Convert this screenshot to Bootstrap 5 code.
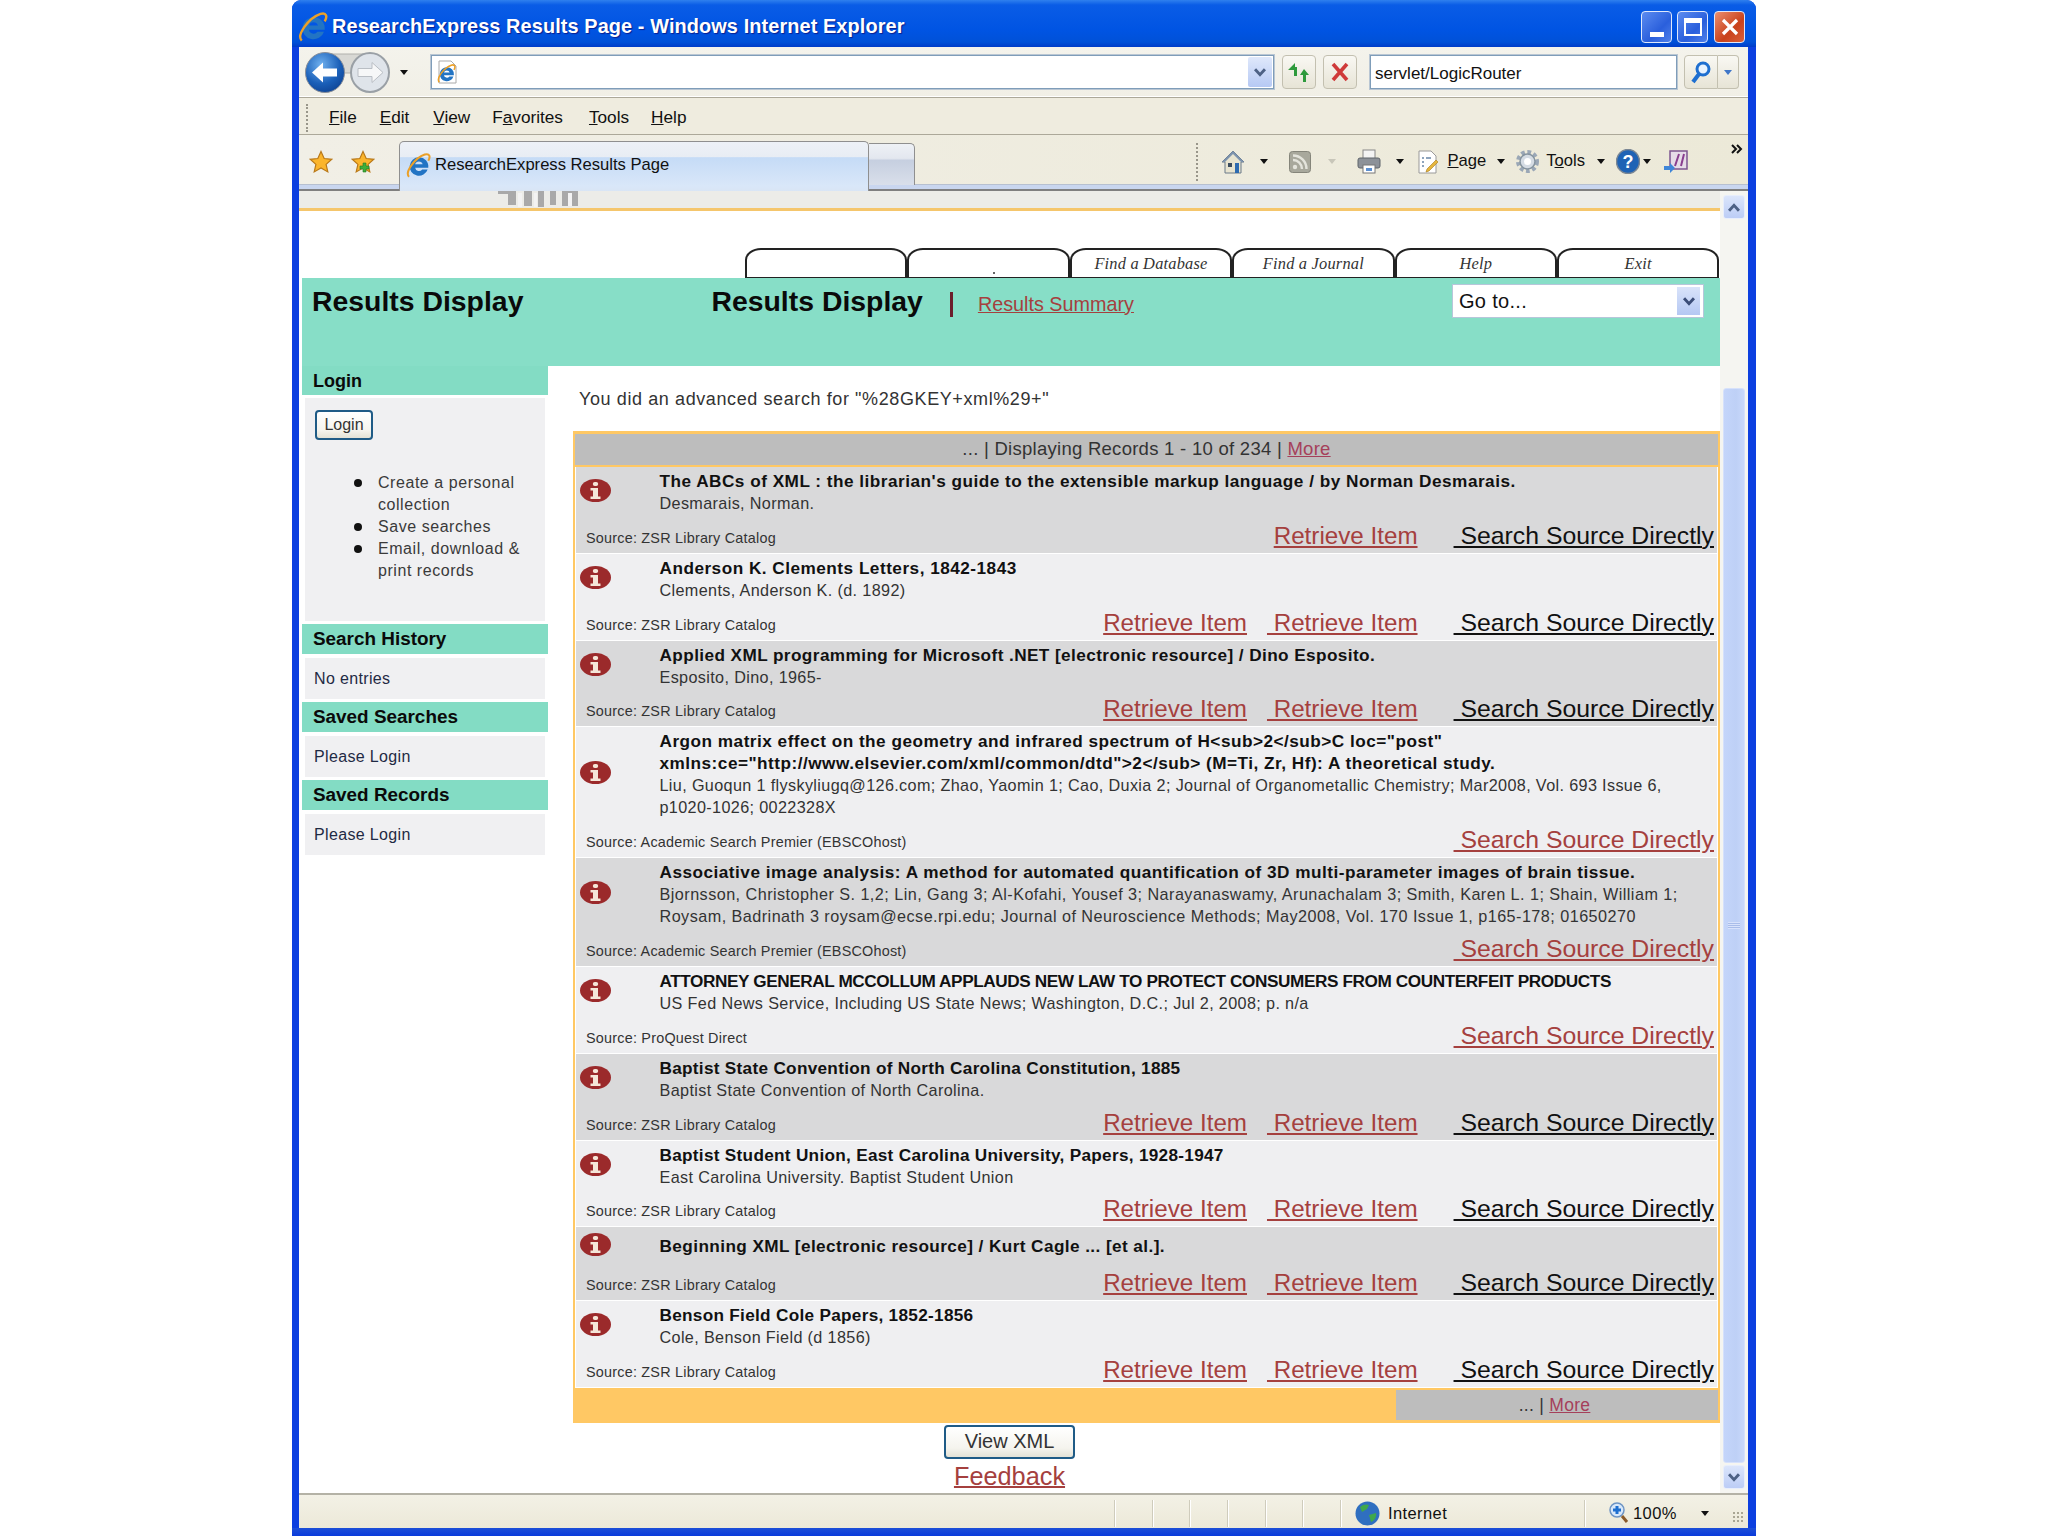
<!DOCTYPE html>
<html lang="en"><head><meta charset="utf-8"><title>ResearchExpress Results Page</title>
<link href="https://cdn.jsdelivr.net/npm/bootstrap@5.3.0/dist/css/bootstrap.min.css" rel="stylesheet">
<style>
html,body{margin:0;background:#fff;overflow:hidden}
body{font-family:"Liberation Sans",Arial,sans-serif;color:#222}
.xp-win{width:1464px;height:1536px;background:#0c3fe0;border-radius:9px 9px 0 0;overflow:hidden}
.xp-title{height:47px;background:linear-gradient(#2f80ee 0,#0a5ce6 5px,#0054e3 30px,#0051d8 42px,#003cc8 47px);padding:6px 11px 0 6px}
.xp-title-text{color:#fff;font-weight:700;font-size:19.9px;letter-spacing:.1px;text-shadow:1px 1px 1px #0a1f8f;margin-left:4px;white-space:nowrap}
.xp-cap{width:31px;height:32px;border:1px solid #dfe8fb;border-radius:4px;background:linear-gradient(135deg,#5c8cf0,#2a5fdc 60%,#4f80ea);margin-left:5px}
.xp-cap.cap-close{background:linear-gradient(135deg,#eb8f6e,#c9421c 60%,#d9603a);margin-left:6px}
.xp-body{margin:0 8px 0 7px}
.addr-row{height:51px;background:linear-gradient(#f4f3ec,#f1efe6);border-bottom:1px solid #aca899;box-shadow:inset 0 -1px 0 #fff}
.nav-pair{width:85px;height:41px;margin-left:6px;flex:none}
.drop-tri{width:0;height:0;border-left:4px solid transparent;border-right:4px solid transparent;border-top:5px solid #111;flex:none}
.tri-main{margin-left:10px}
.addr-box{height:34px;border:1px solid #7f9db9;outline:1px solid #b9c6d3;background:#fff;flex:none}
.addr-main{width:843px;margin-left:23px;padding:0 0 0 4px}
.addr-search{width:307px;margin-left:13px;font-size:17px;padding-left:4px;color:#111;line-height:36px}
.addr-drop{width:24px;height:30px;margin:1px;background:linear-gradient(#dfe8fb,#b6c9f4);border-radius:2px;color:#4d6185}
.tool-btn{height:34px;border:1px solid #c3c0b0;border-radius:4px;background:linear-gradient(#f9f8f3,#e7e4d6)}
.btn-go{width:34px;margin-left:8px}.btn-stop{width:34px;margin-left:7px}
.btn-find{width:34px;margin-left:7px;border-radius:4px 0 0 4px}.btn-find-arrow{width:21px;border-left:0;border-radius:0 4px 4px 0}
.menu-row{height:37px;background:#efecdf;border-bottom:1px solid #aca899;font-size:17.2px;color:#111;padding:3px 0 0 7px}
.menu-row span.mi{white-space:nowrap}
.grip{width:2px;height:28px;border-left:2px dotted #99968a}
.mi-file{margin-left:21px}.mi-edit{margin-left:23px}.mi-view{margin-left:24px}.mi-fav{margin-left:22px}.mi-tools{margin-left:26px}.mi-help{margin-left:22px}
.tab-row{height:56px;background:linear-gradient(90deg,#f1efe6,#ece9d8);box-shadow:inset 0 -6px 0 #c9d6ef,inset 0 -7px 0 #b7c0d0;position:relative;padding-left:10px;font-size:16.6px;color:#111}
.tab-row::after{content:"";position:absolute;left:0;right:0;bottom:0;height:2px;background:#7f7f7f}
.star-a{margin-bottom:3px}.star-b{margin:0 0 3px 18px}
.ie-tab{width:470px;height:50px;margin-left:24px;border:1px solid #8f8f8f;border-bottom:0;border-radius:5px 5px 0 0;background:linear-gradient(#edf1f7 0,#e8edf4 30%,#c5dbf6 32%,#d9e7f9 90%,#d9e5f5);z-index:1;padding:0 0 2px 6px;align-self:flex-end}
.new-tab{width:46px;height:42px;border:1px solid #8f8f8f;border-left:0;border-bottom:0;border-radius:0 5px 0 0;background:linear-gradient(#eef1f6,#e3e7ef 35%,#c6cfe0 40%,#d9dfea);align-self:flex-end;margin-bottom:6px}
.tb-divider{height:38px;border-left:2px dotted #99968a;margin-left:auto;margin-bottom:3px}
.tb-group{margin:0 5px 3px 0}
.ti{flex:none;display:block}
.view{height:1302px;background:#fff}
.pg{flex:1 1 auto;min-width:0;padding-left:3px;background:#fff;overflow:hidden}
.strip{height:17px;background:#ecece8;padding-left:197px;margin-left:-3px}
.orange-line{height:3px;background:#f5c66c;margin-left:-3px}
.tabs-gap{height:37px}
.tabs-line{padding-left:443px}
.rtab{width:162.4px;height:30px;border:2px solid #222;border-bottom:1px solid #222;border-radius:16px 16px 0 0/12px 12px 0 0;background:#fff;font-family:"Liberation Serif",serif;font-style:italic;font-size:16.4px;color:#333;text-align:center;line-height:27px;letter-spacing:.2px}
.band{height:88px;background:#87dec7;padding:0 16px 0 10px;position:relative}
.band-h{font-size:28.4px;font-weight:700;color:#0a0a0a;line-height:46px;white-space:nowrap}
.band-h.h-two{margin-left:188px}
.band-sep{width:3px;height:25px;background:#6b1f2c;margin:14px 0 0 27px}
.band-link{font-size:19.8px;margin:14px 0 0 25px;color:#a5403e;line-height:24px;white-space:nowrap}
.goto{width:252px;height:34px;margin:6px 0 0 auto;background:#fff;border:1px solid #b7c6da;font-size:20px;line-height:32px;padding-left:6px;color:#111;letter-spacing:.3px}
.goto-btn{width:23px;height:28px;margin:2px 3px 0 0;background:linear-gradient(#d9e3fa,#b5c8f3);color:#3b4d78}
.side{width:246px;flex:none}
.side-h{background:#83dcc4;height:30px;padding-left:11px;font-weight:700;font-size:18.9px;line-height:30px;color:#0a0a0a;white-space:nowrap}
.side-h.h-login{height:29px;line-height:31px;font-size:18px}
.side-p{background:#f0f0f2;margin:4px 3px 3px;font-size:16px;padding-left:9px;color:#1f2a44;letter-spacing:.35px}
.side-p.p-mini{height:41px;line-height:41px}
.side-p.p-login{height:223px;margin-top:3px;padding:12px 0 0 10px}
.xp-btn{display:inline-block;background:linear-gradient(#fff,#f5f4ee 70%,#e4e2d6);border:2px solid #1f5b86;border-radius:4px;color:#333;line-height:1}
.btn-login{width:58px;height:30px;font-size:16px;line-height:26px;text-align:center;letter-spacing:0}
.side-list{margin:32px 0 0;padding:0 0 0 63px;color:#3a3a3a;line-height:22px;font-size:16px;list-style:none;letter-spacing:.55px}
.side-list li::before{content:"";display:inline-block;width:8px;height:8px;border-radius:50%;background:#111;margin:0 16px 1px -24px;vertical-align:middle}
.main-col{flex:1 1 auto;min-width:0;padding-left:25px}
.search-line{font-size:18px;color:#333;height:65px;line-height:66px;padding-left:6px;letter-spacing:.6px;white-space:nowrap}
.res-box{background:#fff;border:2px solid #ffc864;border-top-width:3px;border-bottom:0;width:1147px}
.res-head{background:#bdbdbd;border-bottom:2px solid #ffc864;height:33px;font-size:18.5px;color:#333;line-height:30px;box-sizing:border-box;letter-spacing:.27px}
.res-head a,.res-more a{color:#a5405a}
.rec{border-bottom:1px solid #fff;margin:0 1px}
.rec-a{background:#d9d9da}.rec-b{background:#efeff1}
.rec-top{padding:3px 0;min-height:37px}
.info-ic{width:31px;height:23px;flex:none;margin:0 48.5px 3px 4px}
.rec-txt{font-size:16.2px;line-height:22px;color:#333;letter-spacing:.36px;white-space:nowrap}
.rec-txt b{color:#111;font-size:17.2px;letter-spacing:.49px}
.rec-txt b.t-caps{letter-spacing:-.41px}
.rec-txt b.t-near{letter-spacing:.29px}
.rec-txt b.t-mid{letter-spacing:.41px}
.rec-txt .a-wide{letter-spacing:.46px}
.rec-foot{height:35.8px;padding:0 3px 0 10px;white-space:nowrap}
.rec-src{font-size:14.4px;color:#333;line-height:20px;margin-bottom:5px;letter-spacing:.22px}
.rlink{font-size:24.2px;line-height:28px;margin-bottom:3px;color:#a5403e;text-decoration:underline;text-decoration-thickness:2px;text-underline-offset:2px}
.rlink.l-a{margin-right:20px}.rlink.l-b{margin-right:36px}
.rlink.l-s{font-size:24.8px}
.rlink.l-dark{color:#111}
.res-foot{height:35px;background:#ffc864;margin:0 -2px;padding:2px 2px 3px 0}
.res-more{width:322px;margin-left:auto;background:#bdbdbd;font-size:17.5px;color:#333;letter-spacing:.3px;line-height:30px;padding-right:5px}
.pg-foot{padding:2px 3px 0 0}
.btn-xml{width:131px;height:34px;font-size:20px;line-height:29px;color:#333}
.fb-link{display:block;font-size:25.3px;line-height:33px;color:#a5403e;margin-top:1px;text-decoration-thickness:2px}
.sbar{width:28px;flex:none;background:#f5f5f1;padding:4px 3px}
.sb-btn{height:24px;background:linear-gradient(#dbe5fb,#bccdf6);border:1px solid #e8eefc;border-radius:3px;color:#4d6185}
.sb-gap{height:169px}
.sb-thumb{height:1075px;background:linear-gradient(90deg,#c4d5fa,#bed0f6 60%,#c8d8fa);border:1px solid #d6e1fb;border-radius:3px;margin-bottom:2px}
.grip-lines{width:12px;height:7px;background:repeating-linear-gradient(#d8e2fb 0 1px,#a9bdea 1px 2px)}
.status{height:35px;background:linear-gradient(#f3f1e6,#ece9d8);border-top:2px solid #b4b2a6;font-size:16.5px;color:#111;padding-top:3px}
.st-cell{height:27px;border-left:1px solid #fff;box-shadow:-1px 0 0 #cfccbc}
.st-left{width:816px}.st-c1{width:38px}.st-c2{width:37px}.st-c3{width:38px}.st-c4{width:38px}.st-c5{width:37px}.st-c6{width:38px}
.st-zone{width:244px;padding-left:13px;letter-spacing:.4px}
.st-zoom{flex:1 1 auto;padding-left:23px;letter-spacing:.4px}
.st-grip{width:12px;height:12px;margin:8px 4px 0 auto;background:radial-gradient(circle,#a9a693 1px,transparent 1.5px) 0 0/4px 4px}
.bottom-edge{height:8px;background:linear-gradient(#1d4fd6,#0a3bdc)}
.res-dot{display:block;width:2px;height:2px;background:#666;margin:22px 0 0 84px}
.m-home{margin-left:23px}.m-a1{margin-left:15px}.m-rss{margin-left:21px}.m-a2{margin-left:17px}.m-print{margin-left:21px}.m-a3{margin-left:15px}.m-pg{margin-left:13px}.m-pgt{margin-left:8px}.m-a4{margin-left:11px}.m-gear{margin-left:10px}.m-tools{margin-left:6px}.m-a5{margin-left:12px}.m-help{margin-left:11px}.m-a6{margin-left:3px}.m-res{margin-left:12px}
.m-more{margin:-26px 0 0 42px}
.tri-gray{border-top-color:#c8c6b9}.tri-blue{border-top-color:#3f76c8}.tri-zoom{margin-left:24px}
</style></head><body>
<svg width="0" height="0" class="d-block position-absolute" aria-hidden="true"><defs>
<symbol id="ielogo" viewBox="0 0 32 32"><path d="M16.500 5.500a11.800 11.800 0 1 0 11.200 15.500h-7a5 5 0 0 1-9-2.200H28.500a11.800 11.800 0 0 0-12-13.300zM11.700 14.500a5 5 0 0 1 9.600 0z" fill="#2274c4"/><path d="M4 30.500C-2 25 11 6.500 24 2c6.500-2 7.500 3 4.500 8" fill="none" stroke="#eba028" stroke-width="2.600"/></symbol>
<symbol id="i-info" viewBox="0 0 31 23" preserveAspectRatio="none"><ellipse cx="15.500" cy="11.500" rx="15.500" ry="11.500" fill="#9b2a2b"/><rect x="12.800" y="3" width="5.400" height="4" rx="2" fill="#f5e6d8"/><path d="M10.500 9h7.500v8.500h2.500v2.500h-10v-2.500h2.500v-6h-2.500z" fill="#f5e6d8"/></symbol>
<symbol id="i-chev" viewBox="0 0 12 10"><path d="M1.500 2 6 7l4.500-5" fill="none" stroke="currentColor" stroke-width="2.600"/></symbol>
<symbol id="i-chevu" viewBox="0 0 12 10"><path d="M1.500 8 6 3l4.500 5" fill="none" stroke="currentColor" stroke-width="2.600"/></symbol>
<symbol id="i-star" viewBox="0 0 24 24"><path d="M12 1.500l3.200 7 7.600.8-5.700 5.100 1.700 7.500L12 18l-6.800 3.900 1.700-7.500L1.200 9.300l7.600-.8z" fill="#fbb52c" stroke="#b9791a" stroke-width="1.200"/></symbol>
</defs></svg>
<div class="xp-win mx-auto d-flex flex-column">
  <div class="xp-title d-flex align-items-center">
    <svg class="ti" width="30" height="30"><use href="#ielogo"/></svg>
    <span class="xp-title-text">ResearchExpress Results Page - Windows Internet Explorer</span>
    <span class="xp-cap ms-auto d-flex align-items-end justify-content-center pb-1"><svg class="ti" width="14" height="6"><rect width="14" height="5" fill="#fff"/></svg></span>
    <span class="xp-cap d-flex align-items-center justify-content-center"><svg class="ti" width="18" height="18"><rect x="1" y="1" width="16" height="16" fill="none" stroke="#fff" stroke-width="2"/><rect x="1" y="1" width="16" height="4" fill="#fff"/></svg></span>
    <span class="xp-cap cap-close d-flex align-items-center justify-content-center"><svg class="ti" width="20" height="20"><path d="M3 3l14 14M17 3L3 17" stroke="#fff" stroke-width="3.200"/></svg></span>
  </div>
  <div class="xp-body d-flex flex-column flex-grow-1">
    <div class="addr-row d-flex align-items-center">
      <svg class="ti nav-pair" viewBox="0 0 85 41"><defs><radialGradient id="gb" cx=".4" cy=".3" r=".8"><stop offset="0" stop-color="#6fb0ee"/><stop offset=".6" stop-color="#1a5fb8"/><stop offset="1" stop-color="#0c3f8e"/></radialGradient></defs><path d="M20 2h45c12 0 19 8 19 19H1C1 10 8 2 20 2z" fill="#d8d8d4" stroke="#b0b0ac"/><ellipse cx="20" cy="20.500" rx="19.500" ry="20" fill="url(#gb)" stroke="#8a8f98"/><path d="M7 20.500l11-10v6h14v8H18v6z" fill="#fff"/><ellipse cx="65" cy="20.500" rx="19" ry="19.500" fill="#dfe4ea" stroke="#9aa0a6" stroke-width="2"/><path d="M78 20.500l-11-10v6H53v8h14v6z" fill="#f6f7f8" stroke="#b9bec4"/></svg>
      <span class="drop-tri tri-main"></span>
      <div class="addr-box addr-main d-flex align-items-center justify-content-between">
        <svg class="ti" width="23" height="24" viewBox="0 0 23 24"><path d="M3 1h12l5 5v17H3z" fill="#fff" stroke="#aaa"/><use href="#ielogo" x="1" y="4" width="19" height="19"/></svg>
        <span class="addr-drop d-flex align-items-center justify-content-center"><svg class="ti" width="14" height="11"><use href="#i-chev"/></svg></span>
      </div>
      <span class="tool-btn btn-go d-flex align-items-center justify-content-center"><svg class="ti" width="24" height="22" viewBox="0 0 24 22"><path d="M1 9l7-7v4h2v9H7V9zM17 8l5 6h-3v7h-3v-7h-3z" fill="#2e9a3c"/></svg></span>
      <span class="tool-btn btn-stop d-flex align-items-center justify-content-center"><svg class="ti" width="20" height="20"><path d="M3 2l14 16M17 2L3 18" stroke="#cf3a3a" stroke-width="3.600"/></svg></span>
      <div class="addr-box addr-search">servlet/LogicRouter</div>
      <span class="tool-btn btn-find d-flex align-items-center justify-content-center"><svg class="ti" width="22" height="24" viewBox="0 0 22 24"><circle cx="13" cy="9" r="6" fill="#e8f3ff" stroke="#1e6fd0" stroke-width="3"/><path d="M9 14l-6 8" stroke="#1e6fd0" stroke-width="4"/></svg></span>
      <span class="tool-btn btn-find-arrow d-flex align-items-center justify-content-center"><span class="drop-tri tri-blue"></span></span>
    </div>
    <div class="menu-row d-flex align-items-center">
      <span class="grip"></span>
      <span class="mi mi-file"><u>F</u>ile</span><span class="mi mi-edit"><u>E</u>dit</span><span class="mi mi-view"><u>V</u>iew</span><span class="mi mi-fav">F<u>a</u>vorites</span><span class="mi mi-tools"><u>T</u>ools</span><span class="mi mi-help"><u>H</u>elp</span>
    </div>
    <div class="tab-row d-flex align-items-center">
      <svg class="ti star-a" width="24" height="24"><use href="#i-star"/></svg>
      <svg class="ti star-b" width="24" height="24" viewBox="0 0 24 24"><use href="#i-star"/><path d="M9 16h3v-3h3v3h3v3h-3v3h-3v-3H9z" fill="#3fae3a" stroke="#1e7a22" stroke-width=".6"/></svg>
      <div class="ie-tab d-flex align-items-center"><svg class="ti me-1" width="25" height="25"><use href="#ielogo"/></svg><span>ResearchExpress Results Page</span></div>
      <div class="new-tab"></div>
      <span class="tb-divider"></span>
      <div class="tb-group d-flex align-items-center">
        <svg class="ti m-home" width="24" height="25" viewBox="0 0 24 25"><path d="M12 2L1 13h3v11h16V13h3z" fill="#e8e4d0" stroke="#6a7a8a"/><path d="M12 2L1 13h3l8-8 8 8h3z" fill="#7d93ad"/><rect x="14" y="14" width="4" height="10" fill="#2e6bb0"/><rect x="7" y="14" width="4" height="4" fill="#3b4c5e"/></svg>
        <span class="drop-tri m-a1"></span>
        <svg class="ti m-rss" width="22" height="22" viewBox="0 0 22 22"><rect x=".5" y=".5" width="21" height="21" rx="3" fill="#a8a89c" stroke="#85857a"/><circle cx="6" cy="16" r="2.200" fill="#e4e4dc"/><path d="M4 9a9 9 0 0 1 9 9M4 4.500a13.500 13.500 0 0 1 13.500 13.500" fill="none" stroke="#e4e4dc" stroke-width="2.400"/></svg>
        <span class="drop-tri m-a2 tri-gray"></span>
        <svg class="ti m-print" width="24" height="25" viewBox="0 0 24 25"><rect x="6" y="1" width="12" height="9" fill="#f4f4f4" stroke="#888"/><rect x="1" y="9" width="22" height="10" rx="2" fill="#8d9299" stroke="#5f646b"/><rect x="6" y="16" width="12" height="8" fill="#fff" stroke="#777"/><rect x="9" y="19" width="6" height="3" fill="#5b8fd0"/></svg>
        <span class="drop-tri m-a3"></span>
        <svg class="ti m-pg" width="22" height="24" viewBox="0 0 22 24"><path d="M2 1h12l5 5v17H2z" fill="#fff" stroke="#999"/><path d="M5 8h2M5 12h2M5 16h2M9 8h5" stroke="#6a86a8" stroke-width="1.600"/><path d="M10 19l9-9 2 2-9 9-3 1z" fill="#e5b53c" stroke="#a87a18" stroke-width=".6"/></svg>
        <span class="m-pgt"><u>P</u>age</span>
        <span class="drop-tri m-a4"></span>
        <svg class="ti m-gear" width="25" height="25" viewBox="0 0 25 25"><circle cx="12.500" cy="12.500" r="9" fill="none" stroke="#9aa7b6" stroke-width="5" stroke-dasharray="3.500 2.500"/><circle cx="12.500" cy="12.500" r="7.500" fill="#d5dce4" stroke="#86949f" stroke-width="1.500"/><circle cx="12.500" cy="12.500" r="3.500" fill="#fff"/></svg>
        <span class="m-tools">T<u>o</u>ols</span>
        <span class="drop-tri m-a5"></span>
        <svg class="ti m-help" width="24" height="25" viewBox="0 0 24 25"><ellipse cx="12" cy="12.500" rx="11.500" ry="12" fill="#1f63b5" stroke="#7b8794" stroke-width="1.500"/><text x="12" y="19" text-anchor="middle" font-family="Liberation Sans" font-weight="700" font-size="18" fill="#fff">?</text></svg>
        <span class="drop-tri m-a6"></span>
        <svg class="ti m-res" width="26" height="25" viewBox="0 0 26 25"><path d="M7 2h17v18H7z" fill="#e6dce8" stroke="#7d5590" stroke-width="1.500"/><path d="M12 17l4-12M18 17l3-12" stroke="#8a3f8f" stroke-width="2"/><path d="M1 17h6v-3l5 5-5 5v-3H1z" fill="#3f86d8"/></svg>
        <svg class="ti m-more" width="12" height="10"><path d="M1 1l4 4-4 4M6 1l4 4-4 4" fill="none" stroke="#111" stroke-width="2"/></svg>
      </div>
    </div>
    <div class="view d-flex">
      <div class="pg">
        <div class="strip"><svg class="ti" width="82" height="17" viewBox="0 0 82 17"><path d="M2 0h10v3H2zM12 0h8v14h-8zM28 0h8v15h-8zM42 0h6v16h-6zM54 0h6v14h-6zM66 0h16v15H66z" fill="#a9a9a9"/><path d="M22 2h4v14h-4zM38 2h3v14h-3zM72 2h4v13h-4z" fill="#f3f3f3"/></svg></div>
        <div class="orange-line"></div>
        <div class="tabs-gap"></div>
        <div class="d-flex tabs-line">
          <div class="rtab"></div><div class="rtab"><span class="res-dot"></span></div><div class="rtab">Find a Database</div><div class="rtab">Find a Journal</div><div class="rtab">Help</div><div class="rtab">Exit</div>
        </div>
        <div class="band d-flex">
          <div class="band-h">Results Display</div>
          <div class="band-h h-two">Results Display</div>
          <div class="band-sep"></div>
          <a class="band-link" href="#">Results Summary</a>
          <div class="goto d-flex justify-content-between"><span>Go to...</span><span class="goto-btn d-flex align-items-center justify-content-center"><svg class="ti" width="14" height="11"><use href="#i-chev"/></svg></span></div>
        </div>
        <div class="d-flex">
          <div class="side">
            <div class="side-h h-login">Login</div>
            <div class="side-p p-login">
              <a class="xp-btn btn-login text-decoration-none" href="#">Login</a>
              <ul class="side-list"><li>Create a personal collection</li><li>Save searches</li><li>Email, download &amp; print records</li></ul>
            </div>
            <div class="side-h">Search History</div>
            <div class="side-p p-mini">No entries</div>
            <div class="side-h">Saved Searches</div>
            <div class="side-p p-mini">Please Login</div>
            <div class="side-h">Saved Records</div>
            <div class="side-p p-mini">Please Login</div>
          </div>
          <div class="main-col">
            <div class="search-line">You did an advanced search for "%28GKEY+xml%29+"</div>
            <div class="res-box">
              <div class="res-head text-center">... | Displaying Records 1 - 10 of 234 | <a href="#">More</a></div>

              <div class="rec rec-a">
                <div class="rec-top d-flex align-items-center"><svg class="info-ic"><use href="#i-info"/></svg><div class="rec-txt"><b>The ABCs of XML : the librarian's guide to the extensible markup language / by Norman Desmarais.</b><br>Desmarais, Norman.</div></div>
                <div class="rec-foot d-flex align-items-end"><span class="rec-src me-auto">Source: ZSR Library Catalog</span><a class="rlink l-b" href="#">Retrieve Item</a><a class="rlink l-s l-dark" href="#">&nbsp;Search Source Directly</a></div>
              </div>
              <div class="rec rec-b">
                <div class="rec-top d-flex align-items-center"><svg class="info-ic"><use href="#i-info"/></svg><div class="rec-txt"><b>Anderson K. Clements Letters, 1842-1843</b><br>Clements, Anderson K. (d. 1892)</div></div>
                <div class="rec-foot d-flex align-items-end"><span class="rec-src me-auto">Source: ZSR Library Catalog</span><a class="rlink l-a" href="#">Retrieve Item</a><a class="rlink l-b" href="#">&nbsp;Retrieve Item</a><a class="rlink l-s l-dark" href="#">&nbsp;Search Source Directly</a></div>
              </div>
              <div class="rec rec-a">
                <div class="rec-top d-flex align-items-center"><svg class="info-ic"><use href="#i-info"/></svg><div class="rec-txt"><b class="t-mid">Applied XML programming for Microsoft .NET [electronic resource] / Dino Esposito.</b><br>Esposito, Dino, 1965-</div></div>
                <div class="rec-foot d-flex align-items-end"><span class="rec-src me-auto">Source: ZSR Library Catalog</span><a class="rlink l-a" href="#">Retrieve Item</a><a class="rlink l-b" href="#">&nbsp;Retrieve Item</a><a class="rlink l-s l-dark" href="#">&nbsp;Search Source Directly</a></div>
              </div>
              <div class="rec rec-b">
                <div class="rec-top d-flex align-items-center"><svg class="info-ic"><use href="#i-info"/></svg><div class="rec-txt"><b>Argon matrix effect on the geometry and infrared spectrum of H&lt;sub&gt;2&lt;/sub&gt;C loc="post"<br>xmlns:ce="http://www.elsevier.com/xml/common/dtd"&gt;2&lt;/sub&gt; (M=Ti, Zr, Hf): A theoretical study.</b><br>Liu, Guoqun 1 flyskyliugq@126.com; Zhao, Yaomin 1; Cao, Duxia 2; Journal of Organometallic Chemistry; Mar2008, Vol. 693 Issue 6,<br>p1020-1026; 0022328X</div></div>
                <div class="rec-foot d-flex align-items-end"><span class="rec-src me-auto">Source: Academic Search Premier (EBSCOhost)</span><a class="rlink l-s" href="#">&nbsp;Search Source Directly</a></div>
              </div>
              <div class="rec rec-a">
                <div class="rec-top d-flex align-items-center"><svg class="info-ic"><use href="#i-info"/></svg><div class="rec-txt"><b>Associative image analysis: A method for automated quantification of 3D multi-parameter images of brain tissue.</b><br><span class="a-wide">Bjornsson, Christopher S. 1,2; Lin, Gang 3; Al-Kofahi, Yousef 3; Narayanaswamy, Arunachalam 3; Smith, Karen L. 1; Shain, William 1;<br>Roysam, Badrinath 3 roysam@ecse.rpi.edu; Journal of Neuroscience Methods; May2008, Vol. 170 Issue 1, p165-178; 01650270</span></div></div>
                <div class="rec-foot d-flex align-items-end"><span class="rec-src me-auto">Source: Academic Search Premier (EBSCOhost)</span><a class="rlink l-s" href="#">&nbsp;Search Source Directly</a></div>
              </div>
              <div class="rec rec-b">
                <div class="rec-top d-flex align-items-center"><svg class="info-ic"><use href="#i-info"/></svg><div class="rec-txt"><b class="t-caps">ATTORNEY GENERAL MCCOLLUM APPLAUDS NEW LAW TO PROTECT CONSUMERS FROM COUNTERFEIT PRODUCTS</b><br>US Fed News Service, Including US State News; Washington, D.C.; Jul 2, 2008; p. n/a</div></div>
                <div class="rec-foot d-flex align-items-end"><span class="rec-src me-auto">Source: ProQuest Direct</span><a class="rlink l-s" href="#">&nbsp;Search Source Directly</a></div>
              </div>
              <div class="rec rec-a">
                <div class="rec-top d-flex align-items-center"><svg class="info-ic"><use href="#i-info"/></svg><div class="rec-txt"><b class="t-near">Baptist State Convention of North Carolina Constitution, 1885</b><br>Baptist State Convention of North Carolina.</div></div>
                <div class="rec-foot d-flex align-items-end"><span class="rec-src me-auto">Source: ZSR Library Catalog</span><a class="rlink l-a" href="#">Retrieve Item</a><a class="rlink l-b" href="#">&nbsp;Retrieve Item</a><a class="rlink l-s l-dark" href="#">&nbsp;Search Source Directly</a></div>
              </div>
              <div class="rec rec-b">
                <div class="rec-top d-flex align-items-center"><svg class="info-ic"><use href="#i-info"/></svg><div class="rec-txt"><b class="t-near">Baptist Student Union, East Carolina University, Papers, 1928-1947</b><br>East Carolina University. Baptist Student Union</div></div>
                <div class="rec-foot d-flex align-items-end"><span class="rec-src me-auto">Source: ZSR Library Catalog</span><a class="rlink l-a" href="#">Retrieve Item</a><a class="rlink l-b" href="#">&nbsp;Retrieve Item</a><a class="rlink l-s l-dark" href="#">&nbsp;Search Source Directly</a></div>
              </div>
              <div class="rec rec-a">
                <div class="rec-top d-flex align-items-center"><svg class="info-ic"><use href="#i-info"/></svg><div class="rec-txt"><b class="t-mid">Beginning XML [electronic resource] / Kurt Cagle ... [et al.].</b></div></div>
                <div class="rec-foot d-flex align-items-end"><span class="rec-src me-auto">Source: ZSR Library Catalog</span><a class="rlink l-a" href="#">Retrieve Item</a><a class="rlink l-b" href="#">&nbsp;Retrieve Item</a><a class="rlink l-s l-dark" href="#">&nbsp;Search Source Directly</a></div>
              </div>
              <div class="rec rec-b">
                <div class="rec-top d-flex align-items-center"><svg class="info-ic"><use href="#i-info"/></svg><div class="rec-txt"><b class="t-near">Benson Field Cole Papers, 1852-1856</b><br>Cole, Benson Field (d 1856)</div></div>
                <div class="rec-foot d-flex align-items-end"><span class="rec-src me-auto">Source: ZSR Library Catalog</span><a class="rlink l-a" href="#">Retrieve Item</a><a class="rlink l-b" href="#">&nbsp;Retrieve Item</a><a class="rlink l-s l-dark" href="#">&nbsp;Search Source Directly</a></div>
              </div>
              <div class="res-foot"><div class="res-more text-center">... | <a href="#">More</a></div></div>
            </div>
          </div>
        </div>
        <div class="pg-foot text-center">
          <a class="xp-btn btn-xml text-decoration-none" href="#">View XML</a>
          <a class="fb-link" href="#">Feedback</a>
        </div>
      </div>
      <div class="sbar">
        <div class="sb-btn d-flex align-items-center justify-content-center"><svg class="ti" width="14" height="11"><use href="#i-chevu"/></svg></div>
        <div class="sb-gap"></div>
        <div class="sb-thumb d-flex align-items-center justify-content-center"><span class="grip-lines"></span></div>
        <div class="sb-btn d-flex align-items-center justify-content-center"><svg class="ti" width="14" height="11"><use href="#i-chev"/></svg></div>
      </div>
    </div>
    <div class="status d-flex align-items-center">
      <div class="st-left"></div><div class="st-cell st-c1"></div><div class="st-cell st-c2"></div><div class="st-cell st-c3"></div><div class="st-cell st-c4"></div><div class="st-cell st-c5"></div><div class="st-cell st-c6"></div>
      <div class="st-cell st-zone d-flex align-items-center"><svg class="ti me-2" width="25" height="25" viewBox="0 0 25 25"><circle cx="12.500" cy="12.500" r="12" fill="#2f6fc0"/><path d="M5 6c3-3 7-3 9-2l-2 4-5 3zM14 14l7-2c1 4-2 8-5 9z" fill="#3fa84c"/></svg><span>Internet</span></div>
      <div class="st-cell st-zoom d-flex align-items-center"><svg class="ti me-1" width="20" height="22" viewBox="0 0 20 22"><circle cx="8" cy="8" r="7" fill="#d8e8fa" stroke="#6d94c4" stroke-width="1.500"/><path d="M4 8h8M8 4v8" stroke="#1e6fd0" stroke-width="3"/><path d="M13 14l5 6" stroke="#8a5a2a" stroke-width="3"/></svg><span>100%</span><span class="drop-tri tri-zoom"></span><span class="st-grip"></span></div>
    </div>
  </div>
  <div class="bottom-edge"></div>
</div>
<script src="https://cdn.jsdelivr.net/npm/bootstrap@5.3.0/dist/js/bootstrap.bundle.min.js"></script>
</body></html>
